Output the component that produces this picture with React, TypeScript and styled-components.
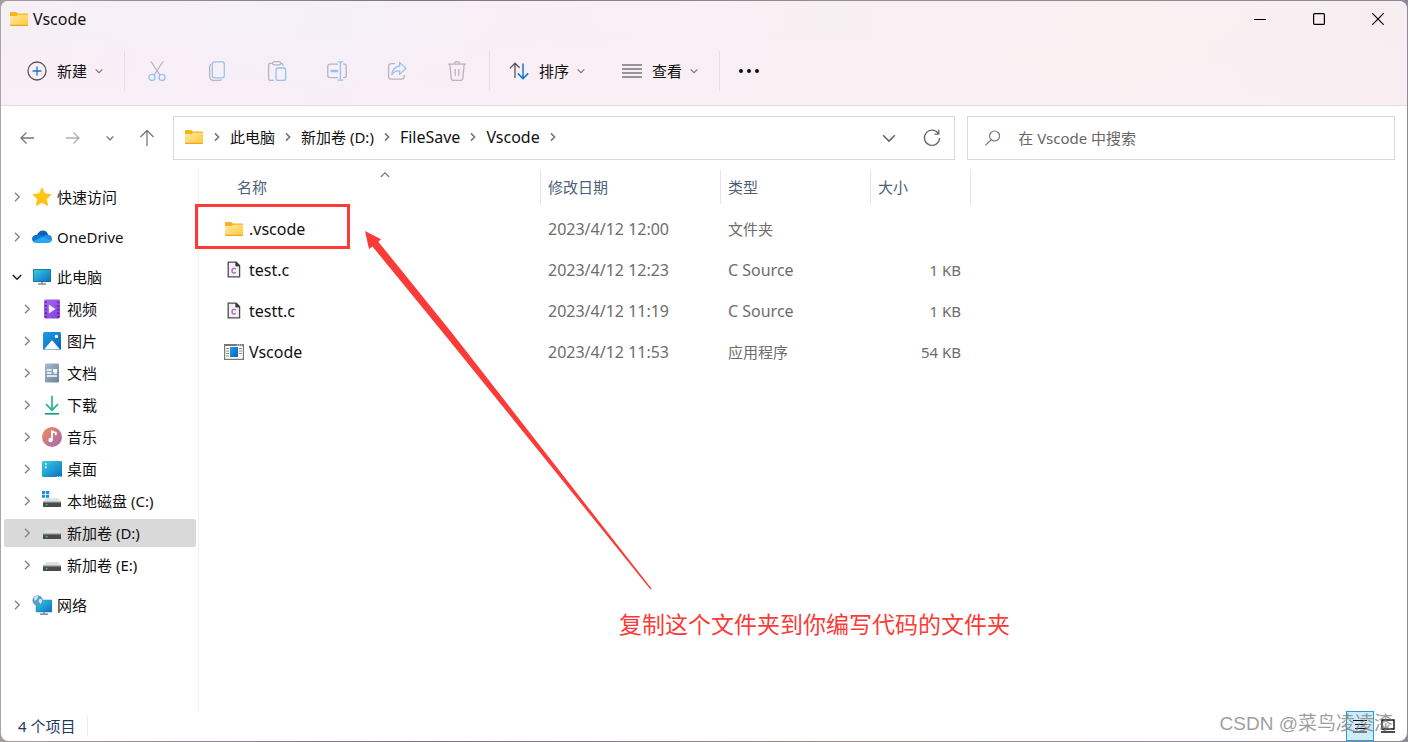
import React from "react";
import styled, { createGlobalStyle, css } from "styled-components";

const GlobalStyle = createGlobalStyle`
  * { box-sizing: border-box; }
  body {
    margin: 0;
    background: linear-gradient(90deg, #a29c9c, #7b7480 30%, #a08a8c 60%, #8d8a98);
    font-family: "Noto Sans", "Noto Sans CJK SC", sans-serif;
    font-size: 15px;
    line-height: 20px;
    color: #111;
  }
  button, input {
    font: inherit;
    color: inherit;
    background: none;
    border: 0;
    padding: 0;
    margin: 0;
  }
  svg { display: block; flex: none; }
`;

const accentRed = "#fb3b38";

/* ---------- window frame ---------- */

const Page = styled.div`
  min-height: 100vh;
  padding: 1px 1px 1px 0;
  display: flex;
`;

const Window = styled.div`
  flex: 1;
  min-width: 0;
  display: flex;
  flex-direction: column;
  border-left: 1px solid #aaa6a8;
  border-radius: 8px;
  overflow: hidden;
  background: #fff;
`;

const Header = styled.header`
  border-bottom: 1px solid #e5dce2;
  background:
    linear-gradient(180deg, rgba(255, 236, 244, 0) 20%, rgba(255, 236, 244, 0.25)),
    linear-gradient(90deg, #f7eff6 0%, #f5f0f8 24%, #f8eff5 38%, #f7f0f3 58%, #f8f0f1 80%, #f8eef2 100%);
`;

const TitleBar = styled.div`
  height: 36px;
  display: flex;
  align-items: center;
  padding-left: 8px;
`;

const Title = styled.h1`
  flex: 1;
  margin: 0 0 0 4px;
  font-size: 16px;
  font-weight: 400;
`;

const CaptionButton = styled.button`
  width: 59px;
  height: 36px;
  display: grid;
  place-items: center;
`;

const Toolbar = styled.div`
  height: 68px;
  display: flex;
  align-items: center;
  padding-left: 26px;
`;

const CommandGroup = styled.div`
  display: flex;
  align-items: center;
  gap: 40px;
  margin: 0 3px;
`;

const MenuGroup = styled.div`
  display: flex;
  align-items: center;
  gap: 35px;
`;

const ToolButton = styled.button`
  display: flex;
  align-items: center;
  gap: 10px;
  > svg:last-child:not(:first-child) { margin: 0 2px 0 -2px; }
`;

const Separator = styled.span`
  width: 1px;
  height: 40px;
  margin: 0 19px;
  background: #e6dfe6;
`;

/* ---------- navigation row ---------- */

const NavRow = styled.div`
  height: 64px;
  display: grid;
  grid-template-columns: 172px minmax(0, 13fr) minmax(0, 7fr);
  align-items: center;
  padding-right: 12px;
`;

const NavButtons = styled.div`
  display: flex;
  align-items: center;
  padding-left: 13px;
  gap: 20px;
`;

const NavButton = styled.button<{ $wide?: boolean }>`
  width: ${(p) => (p.$wide ? "26px" : "auto")};
  display: grid;
  place-items: center;
`;

const fieldBox = css`
  height: 44px;
  min-width: 0;
  display: flex;
  align-items: center;
  border: 1px solid #d9d9d9;
`;

const AddressBar = styled.nav`
  ${fieldBox}
  margin-right: 12px;
  padding: 0 12px 0 10px;
`;

const Crumbs = styled.div`
  flex: 1;
  display: flex;
  align-items: center;
  gap: 8px;
  padding-bottom: 2px;
`;

const Crumb = styled.button<{ $latin?: boolean }>`
  font-size: ${(p) => (p.$latin ? 16 : 15)}px;
  white-space: nowrap;
`;

const AddressActions = styled.div`
  display: flex;
  align-items: center;
  gap: 26px;
`;

const SearchBox = styled.label`
  ${fieldBox}
  gap: 16px;
  padding: 0 16px;
`;

const SearchInput = styled.input`
  flex: 1;
  min-width: 0;
  outline: 0;
  &::placeholder { color: #666; opacity: 1; }
`;

/* ---------- body ---------- */

const Body = styled.div`
  position: relative;
  flex: 1;
  display: flex;
`;

const Sidebar = styled.nav`
  width: 198px;
  flex: none;
  padding: 11px 2px 0 3px;
  border-right: 1px solid #f0f0f0;
`;

const TreeGroup = styled.div`
  display: flex;
  flex-direction: column;
  gap: 4px;
  padding: 2px 0;
  margin-bottom: 8px;
`;

const TreeItem = styled.button<{ $child?: boolean; $selected?: boolean }>`
  height: 28px;
  display: flex;
  align-items: center;
  padding-left: ${(p) => (p.$child ? 18 : 8)}px;
  border-radius: 2px;
  background: ${(p) => (p.$selected ? "#d9d9d9" : "transparent")};
  white-space: nowrap;
  > svg:first-child { margin-right: 10px; }
  > span { margin-left: 5px; }
`;

const FilePane = styled.main`
  flex: 1;
  min-width: 0;
`;

const FileTable = styled.table`
  width: 772px;
  table-layout: fixed;
  border-collapse: collapse;
`;

const HeadCell = styled.th<{ $width: number; $first?: boolean }>`
  width: ${(p) => p.$width}px;
  height: 38px;
  padding: 0 0 0 ${(p) => (p.$first ? 31 : 0)}px;
  vertical-align: top;
  text-align: left;
  font-weight: 400;
`;

const HeadButton = styled.button`
  position: relative;
  display: block;
  width: 100%;
  height: 34px;
  padding-left: 7px;
  border-right: 1px solid #e5e5e5;
  text-align: left;
  color: #4c607a;
`;

const SortMark = styled.span`
  position: absolute;
  top: 0;
  left: 50%;
  margin-left: -5px;
`;

const Cell = styled.td<{ $right?: boolean; $latin?: boolean }>`
  height: 41px;
  padding: 0 10px 0 7px;
  font-size: ${(p) => (p.$latin ? 16 : 15)}px;
  color: #6d6d6d;
  text-align: ${(p) => (p.$right ? "right" : "left")};
`;

const NameCell = styled.td`
  height: 41px;
  padding: 0 0 0 25px;
  font-size: 16px;
`;

const FileName = styled.div`
  display: flex;
  align-items: center;
  gap: 5px;
`;

const StatusBar = styled.footer`
  height: 30px;
  display: flex;
  align-items: center;
  padding: 0 5px 0 17px;
  color: #1e395b;
`;

const Count = styled.span`
  flex: 1;
`;

const CountInner = styled.span`
  display: inline-block;
  padding-right: 12px;
  border-right: 1px solid #ececec;
`;

const ViewButton = styled.button<{ $active?: boolean }>`
  width: 28px;
  height: 30px;
  display: grid;
  place-items: center;
  border: ${(p) => (p.$active ? "1px solid #26a0da" : "0")};
  background: ${(p) => (p.$active ? "#d0ebf8" : "transparent")};
`;

/* ---------- annotations ---------- */

const Highlight = styled.div`
  position: absolute;
  left: 194px;
  top: 34px;
  width: 155px;
  height: 45px;
  border: 3px solid ${accentRed};
`;

const Arrow = styled.svg`
  position: absolute;
  left: 364px;
  top: 61px;
`;

const Note = styled.p`
  position: absolute;
  left: 618px;
  top: 438px;
  margin: 0;
  font-size: 23px;
  line-height: 32px;
  white-space: nowrap;
  color: ${accentRed};
`;

const Watermark = styled.div`
  position: absolute;
  right: 15px;
  bottom: 6px;
  font-family: "Liberation Sans", "Noto Sans CJK SC", sans-serif;
  font-size: 19px;
  line-height: 24px;
  color: rgba(125, 125, 125, 0.75);
  pointer-events: none;
`;

/* ---------- icons ---------- */

type ChevronProps = { dir?: "right" | "down" | "up"; size?: number; color?: string; width?: number };

const Chevron = ({ dir = "right", size = 10, color = "#777", width = 1.4 }: ChevronProps) => {
  const d = { right: "M3 .7 7.2 5 3 9.3", down: "M.8 3 5 7.2 9.2 3", up: "M.8 7 5 2.8 9.2 7" }[dir];
  return (
    <svg width={size} height={size} viewBox="0 0 10 10" fill="none" stroke={color} strokeWidth={width}>
      <path d={d} />
    </svg>
  );
};

const CrumbChevron = () => (
  <svg width="10" height="10" fill="none" stroke="#777" strokeWidth="1.6">
    <path d="M3 1.4 6.6 5 3 8.6" />
  </svg>
);

const Folder = () => (
  <svg width="20" height="20" viewBox="0 0 20 20">
    <path d="M1 3.6Q1 3 1.6 3h5.6l1.6 1.6h9.6q.6 0 .6.6V9H1z" fill="#f6b31c" />
    <path d="M1 7h6.6l1.6-1.2H19v10.4q0 .6-.6.6H1.6q-.6 0-.6-.6z" fill="url(#folder)" />
    <path d="M1 15.8h18q0 1.2-.8 1.2H1.8Q1 17 1 15.8z" fill="#e9a820" />
  </svg>
);

const grey = "#b9b4bc";
const pale = "#93c3ee";

const toolIcons: { label: string; art: React.ReactNode }[] = [
  {
    label: "剪切",
    art: (
      <>
        <path d="M4 .5 12.8 14M16 .5 7.2 14" stroke={grey} />
        <circle cx="5" cy="16.4" r="3" stroke={pale} />
        <circle cx="15" cy="16.4" r="3" stroke={pale} />
      </>
    ),
  },
  {
    label: "复制",
    art: (
      <>
        <path d="M4 3.2Q2.6 4 2.6 6v9q0 4.3 4.2 4.3h5.4q1.6 0 2.2-1" stroke={grey} />
        <rect x="5.3" y=".8" width="12" height="16" rx="2.2" stroke={pale} />
      </>
    ),
  },
  {
    label: "粘贴",
    art: (
      <>
        <path d="M5.6 2.4H3.4Q1.6 2.4 1.6 4.2v13.4q0 1.8 1.8 1.8H7M14 2.4q2 0 2 2.4" stroke={grey} />
        <rect x="5.6" y=".7" width="8" height="3.2" rx="1.6" stroke={grey} />
        <rect x="9" y="7" width="9.6" height="12.4" rx="1.6" stroke={pale} />
      </>
    ),
  },
  {
    label: "重命名",
    art: (
      <>
        <path d="M11 3.2H2.8Q.8 3.2.8 5.2v9.4q0 2 2 2H11M16 3.2h1.2q2 0 2 2v9.4q0 2-2 2H16" stroke={grey} />
        <path d="M13.4 1v18M10.6.9h5.6M10.6 19.1h5.6" stroke={pale} />
        <path d="M3.6 10H11" stroke={pale} strokeWidth="2.4" />
      </>
    ),
  },
  {
    label: "共享",
    art: (
      <>
        <path d="M8 2.6H4.2Q1.6 2.6 1.6 5.2v10.4q0 2.6 2.6 2.6h10.4q2.6 0 2.6-2.6V14" stroke={grey} />
        <path d="M12.6 1.4 19 7.4l-6.4 6V10Q7.6 9.6 4.8 13.6 5.6 6 12.6 5z" stroke={pale} strokeLinejoin="round" />
      </>
    ),
  },
  {
    label: "删除",
    art: (
      <path
        d="M1 3.2h18M7.2 3Q7.2.7 10 .7T12.8 3M2.8 3.4 4.2 17.4q.2 2 2 2h7.6q1.8 0 2-2L17.2 3.4M8.2 8v6.8M11.8 8v6.8"
        stroke={grey}
      />
    ),
  },
];

const LineIcon = ({ children }: { children: React.ReactNode }) => (
  <svg width="20" height="20" viewBox="0 0 20 20" fill="none" strokeWidth="1.3">
    {children}
  </svg>
);

const Drive = () => (
  <>
    <path d="M4 7h12l3 4H1z" fill="#dfe1e4" />
    <path d="M1 11h18v4.4q0 .6-.6.6H1.6q-.6 0-.6-.6z" fill="#4a4a4a" />
    <path d="M1 10.6h18v1.2H1z" fill="#8b8b8b" />
    <circle cx="4.6" cy="13.6" r=".9" fill="#2bea3b" />
  </>
);

const art: Record<string, React.ReactNode> = {
  star: (
    <path
      d="M10 .8 12.8 6.8 19.2 7.6 14.5 12.1 15.7 18.6 10 15.5 4.3 18.6 5.5 12.1.8 7.6 7.2 6.8z"
      fill="#ffc60f"
      stroke="#fbb90a"
      strokeWidth=".6"
      strokeLinejoin="round"
    />
  ),
  cloud: (
    <>
      <path d="M5 8.2Q6.8 3.4 10.8 3.4q4 0 5.4 4.4L11 13z" fill="#0d62b8" />
      <path d="M4.6 7.8Q8 6.8 11 9.6L6 15.8H4.4Q0 15.4 0 11.8 0 8.4 4.6 7.8z" fill="#0f76d3" />
      <path d="M10.6 9.4q2-1.8 5.6-1.6 3.8.6 3.8 4.2 0 1.4-.6 2.2L11 10.4z" fill="#1b8fe4" />
      <path d="M10.6 9.8 19.6 14q-1 1.9-3.6 1.9H4.2q-2 0-3.2-1.3z" fill="#2aa5ef" />
    </>
  ),
  pc: (
    <>
      <path d="M10 14v3M6 17h8" stroke="#7d8a94" strokeWidth="1.6" />
      <rect x="1" y="2" width="18" height="13" rx=".8" fill="#17658f" />
      <rect x="1.7" y="2.7" width="16.6" height="11.6" fill="url(#screen)" />
    </>
  ),
  video: (
    <>
      <rect x="2" y=".5" width="16" height="19" rx="1.4" fill="url(#film)" />
      <path d="M4 2.5v16M16 2.5v16" stroke="#51218f" strokeWidth="1.6" strokeDasharray="1.6 2" />
      <path d="M6.8 5.4 13.6 10l-6.8 4.6z" fill="#f5edff" />
    </>
  ),
  picture: (
    <>
      <rect x="1" y="1" width="18" height="18" rx="1.6" fill="url(#sky)" />
      <path d="M2 18.6 9.2 10q.8-.8 1.6 0L18 18.6z" fill="#f7fbff" />
      <circle cx="14.4" cy="5.4" r="1.7" fill="#fff" />
    </>
  ),
  doc: (
    <>
      <rect x="3" y=".5" width="14" height="19" rx="1.2" fill="url(#paper)" />
      <path d="M5 7h4.6M5 10h4.6M5 13h10M11.6 10H15" stroke="#fff" strokeWidth="1.3" />
      <rect x="11.2" y="6" width="4" height="3" fill="#fff" />
    </>
  ),
  download: (
    <>
      <path d="M10 .8v14M4 9.2l6 6 6-6" fill="none" stroke="#25b890" strokeWidth="1.7" />
      <path d="M3 18.8h14" stroke="#16a085" strokeWidth="1.7" />
    </>
  ),
  music: (
    <>
      <circle cx="10" cy="10" r="10" fill="url(#disc)" />
      <circle cx="8.6" cy="13" r="2.2" fill="#fff" />
      <path d="M10 13V4.4l3.8 1.4v2.4" fill="none" stroke="#fff" strokeWidth="1.8" />
    </>
  ),
  desktop: (
    <>
      <rect x="0" y="2" width="20" height="16" rx="1.2" fill="url(#screen)" />
      <path d="M3 4.2h1.6v1.6H3zM3 7.6h1.6v1.6H3zM15 17h1v1h-1zM17.4 17h1v1h-1z" fill="#fff" />
    </>
  ),
  system: (
    <>
      <Drive />
      <path d="M0 0h3.2v3H0zM4 0h3.2v3H4zM0 3.8h3.2v3H0zM4 3.8h3.2v3H4z" fill="#1b8fdc" />
    </>
  ),
  drive: <Drive />,
  network: (
    <>
      <path d="M12 17v2M8 19.2h8" stroke="#7d8a94" strokeWidth="1.4" />
      <rect x="4" y="5" width="16" height="12" rx=".6" fill="url(#screen)" stroke="#1b7fae" strokeWidth=".5" />
      <circle cx="5.6" cy="5.4" r="5.2" fill="#5b9dc4" />
      <path d="M2 2.4Q4 .6 6.4 1L5 4.2 2.8 6zM7.4 3.4l2.6 1Q10.4 7 8.6 9L6.6 6.6z" fill="#d3e7f2" />
    </>
  ),
  c: (
    <>
      <path d="M4.2 2.2h8l3.4 3.4v11.2H4.2z" fill="#f1f1f4" stroke="#4c4c4c" strokeWidth="1.3" />
      <path d="M11.8 2v4h4z" fill="#3a3a3a" stroke="#3a3a3a" strokeWidth=".8" />
      <path d="M11.8 9.2q-.8-.8-1.8-.8-2 0-2 2.3T10 13q1 0 1.8-.8" fill="none" stroke="#b56ab3" strokeWidth="1.4" />
    </>
  ),
  app: (
    <>
      <rect x=".6" y="2.6" width="18.8" height="14.8" fill="#fbfbfb" stroke="#777" strokeWidth="1.2" />
      <path d="M0 2h20v2H0z" fill="#777" />
      <path d="M13 3h1M15 3h1M17 3h1" stroke="#fff" />
      <path d="M2.2 6.5H5M2.2 9H5M2.2 11.5H5M2.2 14H5M15 6.5h2.8M15 9h2.8M15 11.5h2.8" stroke="#888" />
      <rect x="6" y="5" width="8" height="10" fill="url(#sky)" />
    </>
  ),
};

const Art = ({ name }: { name: string }) =>
  name === "folder" ? (
    <Folder />
  ) : (
    <svg width="20" height="20" viewBox="0 0 20 20">
      {art[name]}
    </svg>
  );

const grads = [
  ["folder", "#ffe9a6", "#ffc937"],
  ["screen", "#37cfe0", "#0c6fc4"],
  ["film", "#a667ee", "#8440dd"],
  ["sky", "#1f9fe8", "#0b62b5"],
  ["paper", "#a9bccf", "#69829c"],
  ["disc", "#f29055", "#a562b8"],
];

const Gradients = () => (
  <svg width="0" height="0" aria-hidden="true">
    <defs>
      {grads.map(([id, a, b]) => (
        <linearGradient key={id} id={id} x1="0" y1="0" x2="1" y2="1">
          <stop offset="0" stopColor={a} />
          <stop offset="1" stopColor={b} />
        </linearGradient>
      ))}
    </defs>
  </svg>
);

/* ---------- data ---------- */

type Node = { icon: string; label: string; open?: boolean; selected?: boolean; children?: Node[] };

const tree: Node[] = [
  { icon: "star", label: "快速访问" },
  { icon: "cloud", label: "OneDrive" },
  {
    icon: "pc",
    label: "此电脑",
    open: true,
    children: [
      { icon: "video", label: "视频" },
      { icon: "picture", label: "图片" },
      { icon: "doc", label: "文档" },
      { icon: "download", label: "下载" },
      { icon: "music", label: "音乐" },
      { icon: "desktop", label: "桌面" },
      { icon: "system", label: "本地磁盘 (C:)" },
      { icon: "drive", label: "新加卷 (D:)", selected: true },
      { icon: "drive", label: "新加卷 (E:)" },
    ],
  },
  { icon: "network", label: "网络" },
];

const files = [
  { icon: "folder", name: ".vscode", date: "2023/4/12 12:00", type: "文件夹", size: "" },
  { icon: "c", name: "test.c", date: "2023/4/12 12:23", type: "C Source", size: "1 KB" },
  { icon: "c", name: "testt.c", date: "2023/4/12 11:19", type: "C Source", size: "1 KB" },
  { icon: "app", name: "Vscode", date: "2023/4/12 11:53", type: "应用程序", size: "54 KB" },
];

const crumbs = ["此电脑", "新加卷 (D:)", "FileSave", "Vscode"];

const isLatin = (text: string) => /^[\x20-\x7e]+$/.test(text);

const TreeRow = ({ node, child }: { node: Node; child?: boolean }) => (
  <TreeItem $child={child} $selected={node.selected}>
    {node.open ? <Chevron dir="down" color="#222" width={1.6} /> : <Chevron color="#858585" />}
    <Art name={node.icon} />
    <span>{node.label}</span>
  </TreeItem>
);

export default function App() {
  return (
    <Page>
      <GlobalStyle />
      <Window>
        <Header>
          <TitleBar>
            <Folder />
            <Title>Vscode</Title>
            <CaptionButton aria-label="最小化">
              <svg width="12" height="12" stroke="#000"><path d="M0 6.5h12" /></svg>
            </CaptionButton>
            <CaptionButton aria-label="最大化">
              <svg width="12" height="12" fill="none" stroke="#000" strokeWidth="1.2">
                <rect x=".6" y=".6" width="10.8" height="10.8" rx="1" />
              </svg>
            </CaptionButton>
            <CaptionButton aria-label="关闭">
              <svg width="12" height="12" stroke="#000" strokeWidth="1.2"><path d="M.3.3l11.4 11.4M11.7.3.3 11.7" /></svg>
            </CaptionButton>
          </TitleBar>
          <Toolbar>
            <ToolButton>
              <LineIcon>
                <circle cx="10" cy="10" r="9" stroke="#555" />
                <path d="M10 5.6v8.8M5.6 10h8.8" stroke="#0f78d4" />
              </LineIcon>
              新建
              <Chevron dir="down" size={8} />
            </ToolButton>
            <Separator />
            <CommandGroup>
              {toolIcons.map((t) => (
                <ToolButton key={t.label} aria-label={t.label} disabled>
                  <LineIcon>{t.art}</LineIcon>
                </ToolButton>
              ))}
            </CommandGroup>
            <Separator />
            <MenuGroup>
              <ToolButton>
                <LineIcon>
                  <path d="M6 17V2.5M.8 7.4 6 2.2l4.6 4.6" stroke="#555" />
                  <path d="M14 2.5v14.8M8.8 12.4 14 17.6l5.2-5.2" stroke="#0f78d4" strokeWidth="1.5" />
                </LineIcon>
                排序
                <Chevron dir="down" size={8} />
              </ToolButton>
              <ToolButton>
                <LineIcon>
                  <path d="M0 4h20M0 8h20M0 12h20M0 16h20" stroke="#777" />
                </LineIcon>
                查看
                <Chevron dir="down" size={8} />
              </ToolButton>
            </MenuGroup>
            <Separator />
            <ToolButton aria-label="更多">
              <svg width="20" height="20" fill="#111">
                <circle cx="2" cy="10" r="2" />
                <circle cx="10" cy="10" r="2" />
                <circle cx="18" cy="10" r="2" />
              </svg>
            </ToolButton>
          </Toolbar>
        </Header>

        <NavRow>
          <NavButtons>
            <NavButton $wide aria-label="后退">
              <svg width="20" height="20" fill="none" stroke="#777" strokeWidth="1.3"><path d="M17 10H4M9.5 4.5 4 10l5.5 5.5" /></svg>
            </NavButton>
            <NavButton $wide aria-label="前进">
              <svg width="20" height="20" fill="none" stroke="#b0b0b0" strokeWidth="1.3"><path d="M3 10h13M10.5 4.5 16 10l-5.5 5.5" /></svg>
            </NavButton>
            <NavButton aria-label="最近的位置">
              <Chevron dir="down" size={8} width={1.6} />
            </NavButton>
            <NavButton $wide aria-label="向上">
              <svg width="20" height="20" fill="none" stroke="#777" strokeWidth="1.3"><path d="M10 18V3M3.5 9 10 2.5 16.5 9" /></svg>
            </NavButton>
          </NavButtons>
          <AddressBar aria-label="地址">
            <Crumbs>
              <Folder />
              {crumbs.map((c) => (
                <React.Fragment key={c}>
                  <CrumbChevron />
                  <Crumb $latin={isLatin(c)}>{c}</Crumb>
                </React.Fragment>
              ))}
              <CrumbChevron />
            </Crumbs>
            <AddressActions>
              <NavButton aria-label="展开地址">
                <Chevron dir="down" size={14} color="#666" width={1.1} />
              </NavButton>
              <NavButton aria-label="刷新">
                <svg width="20" height="20" fill="none" stroke="#666" strokeWidth="1.3">
                  <path d="M16.6 6A7.6 7.6 0 1 0 17.6 10M16.8 1.8V6.2H12.4" />
                </svg>
              </NavButton>
            </AddressActions>
          </AddressBar>
          <SearchBox>
            <svg width="18" height="18" fill="none" stroke="#777" strokeWidth="1.2">
              <circle cx="10.6" cy="7" r="5" />
              <path d="M7 10.8 1.4 16.4" />
            </svg>
            <SearchInput type="text" aria-label="搜索" placeholder="在 Vscode 中搜索" />
          </SearchBox>
        </NavRow>

        <Body>
          <Sidebar>
            {tree.map((n) => (
              <TreeGroup key={n.label}>
                <TreeRow node={n} />
                {n.children?.map((c) => <TreeRow key={c.label} node={c} child />)}
              </TreeGroup>
            ))}
          </Sidebar>
          <FilePane>
            <FileTable>
              <thead>
                <tr>
                  <HeadCell $width={342} $first>
                    <HeadButton>
                      名称
                      <SortMark><Chevron dir="up" width={1.2} /></SortMark>
                    </HeadButton>
                  </HeadCell>
                  <HeadCell $width={180}><HeadButton>修改日期</HeadButton></HeadCell>
                  <HeadCell $width={150}><HeadButton>类型</HeadButton></HeadCell>
                  <HeadCell $width={100}><HeadButton>大小</HeadButton></HeadCell>
                </tr>
              </thead>
              <tbody>
                {files.map((f) => (
                  <tr key={f.name}>
                    <NameCell>
                      <FileName>
                        <Art name={f.icon} />
                        {f.name}
                      </FileName>
                    </NameCell>
                    <Cell $latin>{f.date}</Cell>
                    <Cell $latin={isLatin(f.type)}>{f.type}</Cell>
                    <Cell $right>{f.size}</Cell>
                  </tr>
                ))}
              </tbody>
            </FileTable>
          </FilePane>
          <Highlight />
          <Arrow width="290" height="362" viewBox="0 0 290 362" fill={accentRed}>
            <path d="M0 0 16 8.3 13.3 10.7 87 102 286.5 357.6 285.5 358.4 81.500 106 7.5 15.5 4 18z" />
          </Arrow>
          <Note>复制这个文件夹到你编写代码的文件夹</Note>
        </Body>

        <StatusBar>
          <Count><CountInner>4 个项目</CountInner></Count>
          <ViewButton $active aria-label="详细信息">
            <svg width="14" height="14" stroke="#111" strokeWidth="1.2"><path d="M0 1.5h14M2 5.5h12M2 9.5h12M0 13h14" /></svg>
          </ViewButton>
          <ViewButton aria-label="大图标">
            <svg width="14" height="14" fill="none" stroke="#111" strokeWidth="1.4"><path d="M1 1h12v9H1zM0 13h14" /></svg>
          </ViewButton>
        </StatusBar>
      </Window>
      <Watermark>CSDN @菜鸟凌凌漆</Watermark>
      <Gradients />
    </Page>
  );
}
